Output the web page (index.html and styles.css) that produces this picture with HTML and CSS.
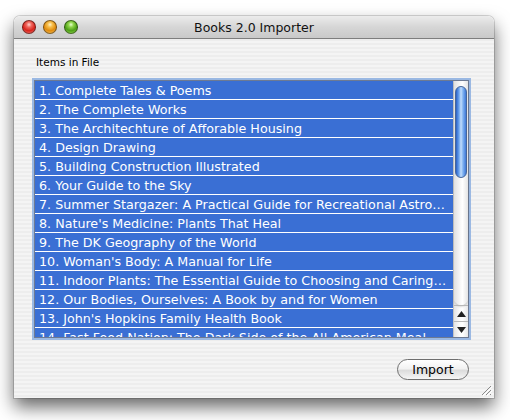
FILE: index.html
```html
<!DOCTYPE html>
<html>
<head>
<meta charset="utf-8">
<link rel="stylesheet" href="styles.css">
</head>
<body>
<div class="window">
  <div class="titlebar">
    <div class="lights">
      <span class="light red"></span>
      <span class="light yellow"></span>
      <span class="light green"></span>
    </div>
    <div class="title">Books 2.0 Importer</div>
    <div></div>
  </div>
  <div class="content">
    <div class="label">Items in File</div>
    <div class="list">
      <div class="rows">
        <div class="row">1. Complete Tales &amp; Poems</div>
        <div class="row">2. The Complete Works</div>
        <div class="row">3. The Architechture of Afforable Housing</div>
        <div class="row">4. Design Drawing</div>
        <div class="row">5. Building Construction Illustrated</div>
        <div class="row">6. Your Guide to the Sky</div>
        <div class="row">7. Summer Stargazer: A Practical Guide for Recreational Astronomy</div>
        <div class="row">8. Nature's Medicine: Plants That Heal</div>
        <div class="row">9. The DK Geography of the World</div>
        <div class="row">10. Woman's Body: A Manual for Life</div>
        <div class="row">11. Indoor Plants: The Essential Guide to Choosing and Caring for Houseplants</div>
        <div class="row">12. Our Bodies, Ourselves: A Book by and for Women</div>
        <div class="row">13. John's Hopkins Family Health Book</div>
        <div class="row">14. Fast Food Nation: The Dark Side of the All-American Meal</div>
      </div>
      <div class="scrollbar">
        <div class="track"><div class="thumb"></div></div>
        <div class="arrow up"><svg width="9" height="6" viewBox="0 0 9 6"><path d="M4.5 0 L9 6 L0 6 Z" fill="#222"/></svg></div>
        <div class="arrow down"><svg width="9" height="6" viewBox="0 0 9 6"><path d="M0 0 L9 0 L4.5 6 Z" fill="#222"/></svg></div>
      </div>
    </div>
    <div class="actions">
      <button class="btn">Import</button>
    </div>
    <svg class="grip" width="11" height="11" viewBox="0 0 11 11">
      <path d="M10 1 L1 10 M10 5 L5 10 M10 9 L9 10" stroke="#8a8a8a" stroke-width="1"/>
      <path d="M11 2 L2 11 M11 6 L6 11" stroke="#ffffff" stroke-width="1"/>
    </svg>
  </div>
</div>
</body>
</html>
```
FILE: styles.css
```css
html, body {
  margin: 0;
  padding: 0;
  background: #ffffff;
  width: 510px;
  height: 420px;
  overflow: hidden;
  font-family: "DejaVu Sans", "Liberation Sans", sans-serif;
}
.window {
  margin: 16px 0 0 14px;
  width: 480px;
  height: 382px;
  border-radius: 6px 6px 0 0;
  box-shadow: 0 9px 18px rgba(0,0,0,0.6), 0 0 0 1px rgba(0,0,0,0.15);
  display: flex;
  flex-direction: column;
  overflow: hidden;
}
.titlebar {
  height: 22px;
  border-bottom: 1px solid #7e7e7e;
  background: linear-gradient(#ececec, #d6d6d6 50%, #c9c9c9);
  display: grid;
  grid-template-columns: 1fr auto 1fr;
  align-items: center;
  border-radius: 6px 6px 0 0;
}
.lights {
  display: flex;
  gap: 7px;
  padding-left: 8px;
}
.light {
  width: 14px;
  height: 14px;
  border-radius: 50%;
  box-sizing: border-box;
  border: 1px solid rgba(0,0,0,0.45);
}
.red {
  background: radial-gradient(circle at 50% 30%, #ffd6d0 0%, #f0685f 25%, #d8231b 60%, #ff8a80 100%);
}
.yellow {
  background: radial-gradient(circle at 50% 30%, #fff2c8 0%, #f7be4a 25%, #e08a0c 60%, #ffd070 100%);
}
.green {
  background: radial-gradient(circle at 50% 30%, #e8ffd0 0%, #8fd44a 25%, #4c9e16 60%, #a8f060 100%);
}
.title {
  font-size: 12.5px;
  color: #111;
  padding-top: 1px;
}
.content {
  flex: 1;
  position: relative;
  background: repeating-linear-gradient(#ededed 0 2px, #f4f4f4 2px 4px);
  padding: 17px 0 0 20px;
  display: flex;
  flex-direction: column;
}
.label {
  font-size: 10.5px;
  line-height: 13px;
  color: #000;
  padding-left: 2px;
  margin-bottom: 11px;
}
.list {
  width: 433px;
  height: 256px;
  border: 1px solid #6d7a93;
  box-shadow: 0 0 0 2px rgba(126, 166, 222, 0.75);
  display: flex;
  background: #fff;
}
.rows {
  flex: 1;
  overflow: hidden;
  background: #fff;
}
.row {
  height: 17px;
  padding-top: 1px;
  line-height: 18px;
  border-bottom: 1px solid #ffffff;
  background: #3a6fd4;
  color: #ffffff;
  font-size: 12.7px;
  padding-left: 4px;
  padding-right: 4px;
  white-space: nowrap;
  overflow: hidden;
  text-overflow: ellipsis;
}
.scrollbar {
  width: 15px;
  display: flex;
  flex-direction: column;
  background: linear-gradient(90deg, #e4e4e4, #fbfbfb 40%, #ffffff 60%, #e8e8e8);
  border-left: 1px solid #c4c4c4;
  box-sizing: border-box;
}
.track {
  flex: 1;
  padding-top: 5px;
  border-radius: 0 0 7px 7px;
  background: linear-gradient(90deg, #e0e0e0, #f8f8f8 45%, #ffffff 60%, #e4e4e4);
  box-shadow: 0 2px 2px rgba(0,0,0,0.15);
}
.thumb {
  height: 92px;
  margin: 0 1px;
  border-radius: 6px;
  border: 1px solid #46669a;
  box-sizing: border-box;
  background: linear-gradient(90deg, #2a5fc4, #6ba4f0 30%, #c2ddfb 50%, #7fb2f2 70%, #3f78d6);
}
.arrow {
  height: 16px;
  display: flex;
  align-items: center;
  justify-content: center;
  border-top: 1px solid #b8b8b8;
  box-sizing: border-box;
}
.actions {
  display: flex;
  justify-content: flex-end;
  padding-right: 25px;
  margin-top: 21px;
}
.btn {
  width: 72px;
  height: 21px;
  border-radius: 11px;
  border: 1px solid #6e6e6e;
  background: linear-gradient(#ffffff, #f2f2f2 45%, #dcdcdc 55%, #f6f6f6);
  font-family: "DejaVu Sans", "Liberation Sans", sans-serif;
  font-size: 12.5px;
  color: #000;
  padding: 0;
  line-height: 19px;
}
.grip {
  position: absolute;
  right: 2px;
  bottom: 2px;
}
```
